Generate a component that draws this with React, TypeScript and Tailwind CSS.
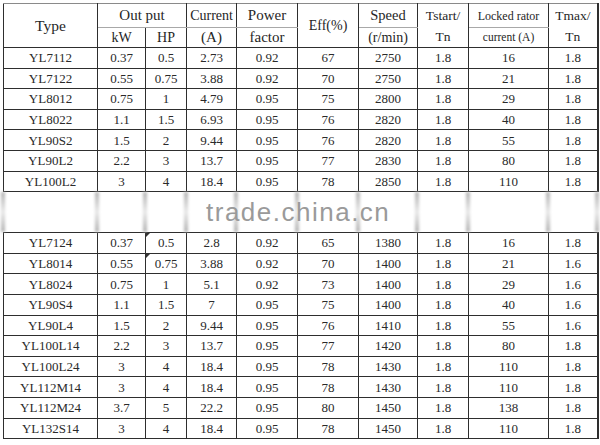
import React from 'react'

type Row = string[]

const first: Row[] = [
  ['YL7112', '0.37', '0.5', '2.73', '0.92', '67', '2750', '1.8', '16', '1.8'],
  ['YL7122', '0.55', '0.75', '3.88', '0.92', '70', '2750', '1.8', '21', '1.8'],
  ['YL8012', '0.75', '1', '4.79', '0.95', '75', '2800', '1.8', '29', '1.8'],
  ['YL8022', '1.1', '1.5', '6.93', '0.95', '76', '2820', '1.8', '40', '1.8'],
  ['YL90S2', '1.5', '2', '9.44', '0.95', '76', '2820', '1.8', '55', '1.8'],
  ['YL90L2', '2.2', '3', '13.7', '0.95', '77', '2830', '1.8', '80', '1.8'],
  ['YL100L2', '3', '4', '18.4', '0.95', '78', '2850', '1.8', '110', '1.8'],
]

const second: Row[] = [
  ['YL7124', '0.37', '0.5', '2.8', '0.92', '65', '1380', '1.8', '16', '1.8'],
  ['YL8014', '0.55', '0.75', '3.88', '0.92', '70', '1400', '1.8', '21', '1.6'],
  ['YL8024', '0.75', '1', '5.1', '0.92', '73', '1400', '1.8', '29', '1.6'],
  ['YL90S4', '1.1', '1.5', '7', '0.95', '75', '1400', '1.8', '40', '1.6'],
  ['YL90L4', '1.5', '2', '9.44', '0.95', '76', '1410', '1.8', '55', '1.6'],
  ['YL100L14', '2.2', '3', '13.7', '0.95', '77', '1420', '1.8', '80', '1.8'],
  ['YL100L24', '3', '4', '18.4', '0.95', '78', '1430', '1.8', '110', '1.8'],
  ['YL112M14', '3', '4', '18.4', '0.95', '78', '1430', '1.8', '110', '1.8'],
  ['YL112M24', '3.7', '5', '22.2', '0.95', '80', '1450', '1.8', '138', '1.8'],
  ['YL132S14', '3', '4', '18.4', '0.95', '78', '1450', '1.8', '110', '1.8'],
]

// column widths: 94 48 41 50 61 61 59 51 80 49
const Cols = () => (
  <colgroup>
    <col className="w-[94px]" />
    <col className="w-[48px]" />
    <col className="w-[41px]" />
    <col className="w-[50px]" />
    <col className="w-[61px]" />
    <col className="w-[61px]" />
    <col className="w-[59px]" />
    <col className="w-[51px]" />
    <col className="w-[80px]" />
    <col className="w-[49px]" />
  </colgroup>
)

const spacers = [
  'w-[90px]',
  'w-[44px]',
  'w-[37px]',
  'w-[46px]',
  'w-[57px]',
  'w-[57px]',
  'w-[55px]',
  'w-[47px]',
  'w-[76px]',
  'w-[45px]',
]

const serif = "[font-family:'Liberation_Serif',serif]"
const td = `${serif} border border-[#2e2e2e] p-0 text-center align-middle leading-none text-[13px] text-[#2a2a2a]`
const th = `${serif} border border-[#2e2e2e] p-0 text-center align-middle font-normal leading-none text-[#262626]`

function DataRows({ rows, marks }: { rows: Row[]; marks?: boolean }) {
  return (
    <>
      {rows.map((r, i) => (
        <tr key={r[0]} className="h-[20.6px]">
          {r.map((v, j) => (
            <td key={j} className={`${td} ${j === 9 ? 'border-r-2' : ''} relative`}>
              {marks && j === 2 && i < 2 && (
                <span className="absolute left-0 top-0 w-0 h-0 border-t-[4px] border-t-[#333] border-r-[4px] border-r-transparent" />
              )}
              {v}
            </td>
          ))}
        </tr>
      ))}
    </>
  )
}

function Bar() {
  return (
    <div className="flex-none w-[4px] h-full bg-linear-to-b from-[#b0b0b0] via-[#e8e8e8] to-[#b0b0b0] blur-[1.5px]" />
  )
}

export default function App() {
  return (
    <div className={`w-[600px] h-[445px] bg-white pl-[3px] pt-[3px] ${serif} overflow-hidden`}>
      <table className={`table-fixed border-collapse w-[594px] ${serif}`}>
        <Cols />
        <thead>
          <tr className="h-[24px]">
            <th rowSpan={2} className={`${th} border-t-[#8a8a8a] text-[15.5px]`}>Type</th>
            <th colSpan={2} className={`${th} border-t-[#8a8a8a] border-b-[#a8a8a8] text-[15px]`}>Out put</th>
            <th className={`${th} border-t-[#8a8a8a] border-b-[#a8a8a8] text-[14px]`}>Current</th>
            <th className={`${th} border-t-[#8a8a8a] border-b-[#a8a8a8] text-[15px]`}>Power</th>
            <th rowSpan={2} className={`${th} border-t-[#8a8a8a] text-[14px]`}>Eff(%)</th>
            <th className={`${th} border-t-[#8a8a8a] border-b-[#a8a8a8] text-[14.5px]`}>Speed</th>
            <th rowSpan={2} className={`${th} border-t-[#8a8a8a] text-[13.5px] !leading-[21px]`}>
              Tstart/
              <br />
              Tn
            </th>
            <th className={`${th} border-t-[#8a8a8a] border-b-[#a8a8a8] text-[12px]`}>Locked rator</th>
            <th rowSpan={2} className={`${th} border-t-[#8a8a8a] border-r-2 text-[13.5px] !leading-[21px]`}>
              Tmax/
              <br />
              Tn
            </th>
          </tr>
          <tr className="h-[20px]">
            <th className={`${th} text-[14px]`}>kW</th>
            <th className={`${th} text-[14px]`}>HP</th>
            <th className={`${th} text-[15px]`}>(A)</th>
            <th className={`${th} text-[15px]`}>factor</th>
            <th className={`${th} text-[14px]`}>(r/min)</th>
            <th className={`${th} text-[11.5px]`}>current (A)</th>
          </tr>
        </thead>
        <tbody>
          <DataRows rows={first} />
        </tbody>
      </table>

      <div className="relative flex h-[40px] w-[594px]">
        <div className="-ml-[2px] flex h-full">
          <Bar />
          {spacers.map((s, k) => (
            <React.Fragment key={k}>
              <div className={`flex-none ${s}`} />
              <Bar />
            </React.Fragment>
          ))}
        </div>
        <span className="absolute left-[203px] top-[7px] [font-family:'Liberation_Sans',Arial,sans-serif] text-[26px] tracking-[1.5px] text-[#9a9a9a] leading-none">
          trade.china.cn
        </span>
      </div>

      <table className={`table-fixed border-collapse w-[594px] ${serif}`}>
        <Cols />
        <tbody>
          <DataRows rows={second} marks />
        </tbody>
      </table>
    </div>
  )
}
